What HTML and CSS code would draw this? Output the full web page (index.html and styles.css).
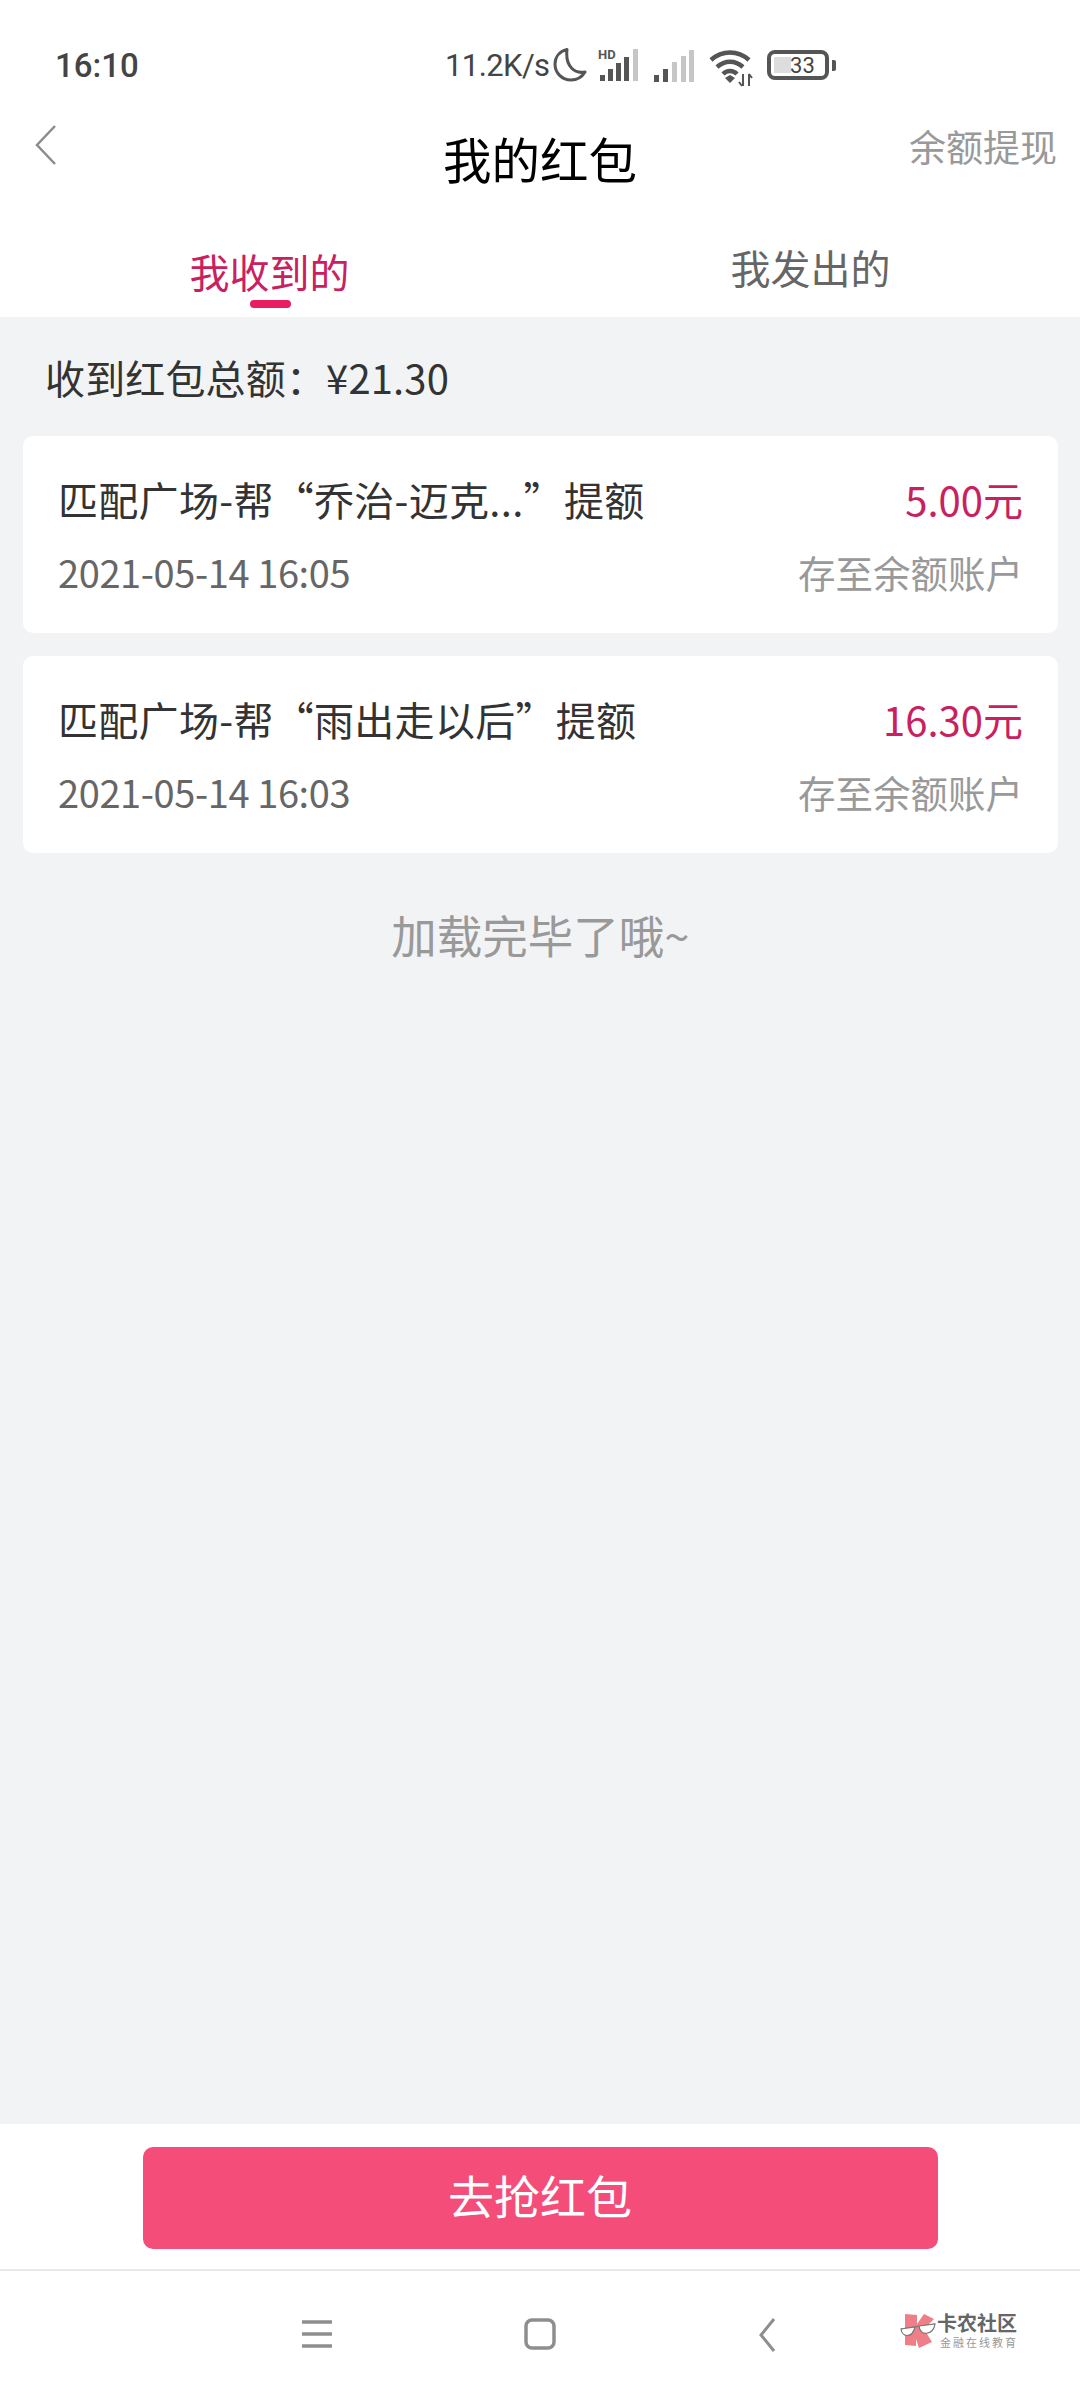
FILE: index.html
```html
<!DOCTYPE html>
<html lang="zh-CN">
<head>
    <meta charset="UTF-8">
    <meta name="viewport" content="width=device-width, initial-scale=1.0">
    <title>我的红包</title>
    <link rel="stylesheet" href="styles.css">
</head>
<body>
    <div class="status-bar">
        <span class="status-time">16:10</span>
        <div class="status-icons">
            <span class="status-speed">11.2K/s</span>
            <svg class="icon-moon" width="34" height="36" viewBox="0 0 34 36"><path d="M14 2.5 C6 4.5 2 10.500 2 17 C2 26 9 33 18 33 C24 33 29 30 32 25 C22 27 12 20 14 2.500 Z" fill="none" stroke="#555" stroke-width="3" stroke-linejoin="round"/></svg>
            <svg class="icon-signal-hd" width="42" height="34" viewBox="0 0 42 34">
                <text x="0" y="11" class="hd-text">HD</text>
                <rect x="2" y="27" width="5" height="6" fill="#555"/>
                <rect x="10" y="21" width="5" height="12" fill="#555"/>
                <rect x="18" y="15" width="5" height="18" fill="#555"/>
                <rect x="26" y="9" width="5" height="24" fill="#555"/>
                <rect x="35" y="1" width="5" height="32" fill="#c6c6c6"/>
            </svg>
            <svg class="icon-signal" width="40" height="32" viewBox="0 0 40 32">
                <rect x="0" y="25" width="5" height="7" fill="#555"/>
                <rect x="9" y="19" width="5" height="13" fill="#555"/>
                <rect x="18" y="12" width="5" height="20" fill="#c6c6c6"/>
                <rect x="27" y="6" width="5" height="26" fill="#c6c6c6"/>
                <rect x="35" y="0" width="5" height="32" fill="#c6c6c6"/>
            </svg>
            <svg class="icon-wifi" width="44" height="38" viewBox="0 0 44 38">
                <path d="M2 11 C13 1 29 1 40 11" fill="none" stroke="#555" stroke-width="4.500"/>
                <path d="M8 18 C16 11 26 11 34 18" fill="none" stroke="#555" stroke-width="4.500"/>
                <path d="M14 25 C18 21 24 21 28 25" fill="none" stroke="#555" stroke-width="4.500"/>
                <path d="M16 29 L21 26 L26 29 L21 34 Z" fill="#555"/>
                <path d="M34 25 V37 M33 37 L30 33 M40 37 V25 M40 25 L43 29" fill="none" stroke="#555" stroke-width="2"/>
            </svg>
            <div class="battery">
                <div class="battery-body">
                    <div class="battery-fill"></div>
                    <span class="battery-num">33</span>
                </div>
                <div class="battery-cap"></div>
            </div>
        </div>
    </div>

    <header class="nav-header">
        <svg class="back-icon" width="24" height="40" viewBox="0 0 24 40"><path d="M21 1 L3 20 L21 39" fill="none" stroke="#8c8c8c" stroke-width="2.500"/></svg>
        <h1>我的红包</h1>
        <a class="withdraw">余额提现</a>
    </header>

    <div class="tabs">
        <div class="tab active">我收到的<span class="tab-line"></span></div>
        <div class="tab">我发出的</div>
    </div>

    <main class="content">
        <p class="summary">收到红包总额：¥21.30</p>

        <div class="card">
            <div class="card-row">
                <span class="card-title">匹配广场-帮“乔治-迈克...”提额</span>
                <span class="card-amount">5.00元</span>
            </div>
            <div class="card-row card-row-sub">
                <span class="card-date">2021-05-14 16:05</span>
                <span class="card-note">存至余额账户</span>
            </div>
        </div>

        <div class="card">
            <div class="card-row">
                <span class="card-title">匹配广场-帮“雨出走以后”提额</span>
                <span class="card-amount">16.30元</span>
            </div>
            <div class="card-row card-row-sub">
                <span class="card-date">2021-05-14 16:03</span>
                <span class="card-note">存至余额账户</span>
            </div>
        </div>

        <p class="load-end">加载完毕了哦~</p>
    </main>

    <div class="action-bar">
        <button class="grab-btn">去抢红包</button>
    </div>

    <footer class="sys-nav">
        <svg class="sys-menu" width="30" height="28" viewBox="0 0 30 28">
            <path d="M0 2 H30 M0 14 H30 M0 26 H30" stroke="#8e8e8e" stroke-width="3.500"/>
        </svg>
        <svg class="sys-home" width="32" height="32" viewBox="0 0 32 32">
            <rect x="2" y="2" width="28" height="28" rx="6" fill="none" stroke="#8e8e8e" stroke-width="3.500"/>
        </svg>
        <svg class="sys-back" width="18" height="34" viewBox="0 0 18 34">
            <path d="M16 1 L3 17 L16 33" fill="none" stroke="#8e8e8e" stroke-width="3"/>
        </svg>
        <div class="watermark">
            <svg class="watermark-logo" width="36" height="36" viewBox="0 0 36 36">
                <path d="M5 1 L17 2 V11 L24 1 L34 6 L24 16 L32 29 L19 35 L16 26 V33 L5 32 Z" fill="#ee7f88"/>
                <path d="M1 16 L35 11" stroke="#777" stroke-width="1.200"/>
                <path d="M1 16 C2 24 12 26 15 14 Z" fill="#fff" stroke="#777" stroke-width="1.200"/>
                <path d="M19 13 C20 24 34 22 35 11 Z" fill="#fff" stroke="#777" stroke-width="1.200"/>
            </svg>
            <div class="watermark-text">
                <span class="watermark-name">卡农社区</span>
                <span class="watermark-sub">金融在线教育</span>
            </div>
        </div>
    </footer>
</body>
</html>
```

FILE: styles.css
```css
* {
    box-sizing: border-box;
}

body {
    margin: 0;
    width: 1080px;
    height: 2400px;
    display: flex;
    flex-direction: column;
    background: #fff;
    font-family: "Noto Sans CJK SC", "Noto Sans", sans-serif;
}

.status-bar {
    height: 88px;
    padding: 42px 0 0 55px;
    display: flex;
    align-items: center;
    color: #444;
}

.status-time {
    width: 390px;
    font-family: Roboto, sans-serif;
    font-size: 33px;
    font-weight: 500;
}

.status-icons {
    display: flex;
    align-items: center;
}

.status-speed {
    font-family: Roboto, sans-serif;
    font-size: 31px;
    letter-spacing: -0.6px;
    margin-right: 4px;
}

.hd-text {
    font-family: Roboto, sans-serif;
    font-size: 13px;
    font-weight: 700;
    fill: #555;
}

.icon-moon {
    margin-right: 11px;
}

.icon-signal {
    margin: 2px 15px 0 14px;
}

.icon-wifi {
    margin: 6px 14px 0 0;
}

.battery {
    display: flex;
    align-items: center;
}

.battery-body {
    width: 62px;
    height: 30px;
    border: 4px solid #555;
    border-radius: 8px;
    padding: 3px;
    position: relative;
}

.battery-fill {
    width: 17px;
    height: 100%;
    background: #ddd;
}

.battery-num {
    position: absolute;
    top: 0;
    left: 0;
    right: 0;
    bottom: 0;
    padding-left: 8px;
    display: flex;
    align-items: center;
    justify-content: center;
    font-family: Roboto, sans-serif;
    font-size: 22px;
    color: #444;
}

.battery-cap {
    width: 4px;
    height: 11px;
    margin-left: 3px;
    background: #555;
    border-radius: 0 2px 2px 0;
}

.nav-header {
    height: 112px;
    position: relative;
    display: flex;
    align-items: center;
    justify-content: center;
}

.back-icon {
    position: absolute;
    left: 34px;
    top: 37px;
}

.nav-header h1 {
    margin: 28px 0 0;
    font-size: 48.500px;
    font-weight: 400;
    color: #000;
}

.withdraw {
    position: absolute;
    right: 23px;
    top: 31px;
    font-size: 37px;
    color: #999;
}

.tabs {
    height: 117px;
    display: flex;
}

.tab {
    flex: 1;
    position: relative;
    padding: 37px 0 0 0;
    text-align: center;
    font-size: 40px;
    line-height: 60px;
    color: #666;
}

.tab:first-child {
    padding-right: 2px;
}

.tab.active {
    padding-top: 41px;
    color: #c9215f;
}

.tab-line {
    position: absolute;
    left: 250px;
    top: 100px;
    width: 41px;
    height: 8px;
    border-radius: 4px;
    background: #e81d62;
}

.content {
    flex: 1;
    padding: 0 22px 0 23px;
    background: #f2f3f5;
}

.summary {
    margin: 0;
    padding: 31px 0 30px 22px;
    font-size: 40px;
    letter-spacing: 0.15px;
    line-height: 58px;
    color: #333;
}

.card {
    height: 197px;
    margin-bottom: 23px;
    padding: 32px 35px 0;
    background: #fff;
    border-radius: 10px;
}

.card-row {
    display: flex;
    justify-content: space-between;
    align-items: center;
    height: 62px;
}

.card-row-sub {
    margin-top: 10px;
}

.card-title {
    font-size: 40px;
    letter-spacing: 0.3px;
    color: #333;
}

.card-amount {
    font-size: 40px;
    color: #c9215f;
}

.card-date {
    font-size: 38px;
    letter-spacing: -0.4px;
    color: #666;
}

.card-note {
    font-size: 37.500px;
    color: #999;
}

.load-end {
    margin: 49px 0 0;
    text-align: center;
    font-size: 45.500px;
    line-height: 64px;
    color: #999;
}

.action-bar {
    height: 147px;
    padding-top: 23px;
    display: flex;
    justify-content: center;
    align-items: flex-start;
    background: #fff;
    border-bottom: 2px solid #e8e8e8;
}

.grab-btn {
    width: 795px;
    height: 102px;
    padding: 0 0 8px;
    border: none;
    border-radius: 10px;
    background: #f54d7a;
    color: #fff;
    font-family: inherit;
    font-size: 46px;
}

.sys-nav {
    height: 129px;
    position: relative;
    display: flex;
    align-items: flex-start;
    padding: 49px 0 0 302px;
}

.sys-home {
    margin-left: 192px;
    margin-top: -2px;
}

.sys-back {
    margin-left: 202px;
    margin-top: -2px;
}

.watermark {
    position: absolute;
    left: 900px;
    top: 42px;
    display: flex;
    align-items: center;
    gap: 1px;
}

.watermark-text {
    display: flex;
    flex-direction: column;
    gap: 3px;
}

.watermark-name {
    font-size: 20px;
    line-height: 20px;
    font-weight: 700;
    color: #666;
}

.watermark-sub {
    padding-left: 3px;
    font-size: 11px;
    line-height: 13px;
    letter-spacing: 2px;
    color: #999;
}
```
